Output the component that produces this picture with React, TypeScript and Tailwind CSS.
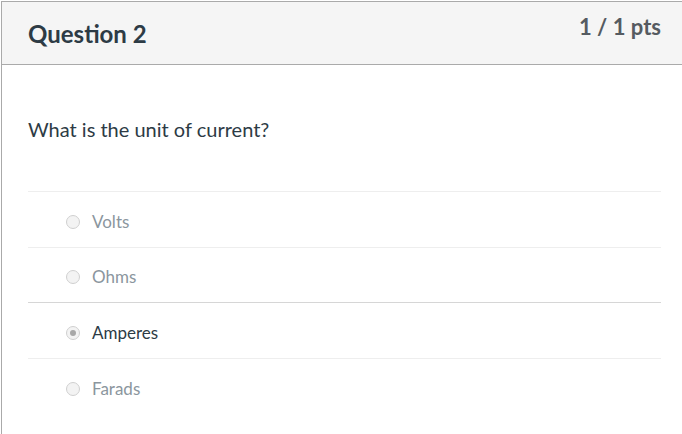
const answers = [
  { label: "Volts", selected: false, height: "h-[56px]" },
  { label: "Ohms", selected: false, height: "h-[55px]" },
  { label: "Amperes", selected: true, height: "h-[56px]" },
  { label: "Farads", selected: false, height: "h-[56px]" },
];

function Radio({ checked }: { checked: boolean }) {
  return (
    <span className="flex h-[14px] w-[14px] items-center justify-center rounded-full border border-[#d0d0d0] bg-[#f3f3f3]">
      {checked && <span className="h-[6px] w-[6px] rounded-full bg-[#a8a8a8]" />}
    </span>
  );
}

export default function App() {
  return (
    <div className="h-[434px] w-[682px] overflow-hidden bg-white font-['Lato','Liberation_Sans',sans-serif]">
      <div className="ml-px mt-px min-h-[433px] w-[700px] border-l border-t border-[#aaaaaa]">
        {/* Header */}
        <div className="flex h-[63px] items-start justify-between border-b border-[#aaaaaa] bg-[#f5f5f5] pl-[26px] pr-[40px]">
          <h2 className="mt-[17px] text-[24px] font-bold leading-[30px] text-[#2d3b45]">Question 2</h2>
          <span className="mt-[12px] text-[22px] font-bold leading-[26px] text-[#555b61]">1 / 1 pts</span>
        </div>

        {/* Body */}
        <div className="pl-[26px] pr-[39px]">
          <p className="mt-[49px] w-[633px] text-[20px] leading-[30px] text-[#2d3b45]">What is the unit of current?</p>
          <div className="mt-[47px] w-[633px]">
            {answers.map((a) => (
              <div
                key={a.label}
                className={`flex ${a.height} items-center gap-[12px] border-t pl-[38px] pt-[4px] ${
                  a.selected ? "border-[#d6d6d6]" : "border-[#eeeeee]"
                }`}
              >
                <Radio checked={a.selected} />
                <span className={`text-[17px] leading-[24px] ${a.selected ? "text-[#2d3b45]" : "text-[#8b969e]"}`}>
                  {a.label}
                </span>
              </div>
            ))}
          </div>
        </div>
      </div>
    </div>
  );
}
